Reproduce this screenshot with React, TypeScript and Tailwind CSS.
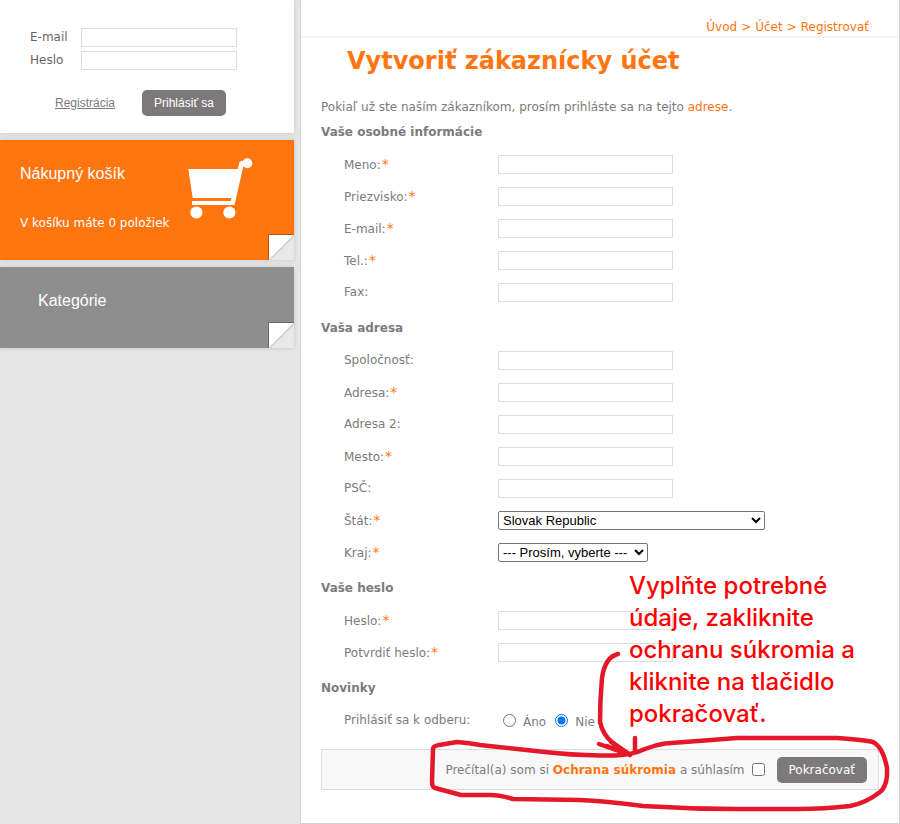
import type { ReactNode } from "react";

type FieldItem = {
	id: string;
	label: string;
	required?: boolean;
	type?: string;
}

const personalFields: FieldItem[] = [
	{ id: 'firstname', label: 'Meno:', required: true },
	{ id: 'lastname', label: 'Priezvisko:', required: true },
	{ id: 'email', label: 'E-mail:', required: true, type: 'email' },
	{ id: 'telephone', label: 'Tel.:', required: true, type: 'tel' },
	{ id: 'fax', label: 'Fax:' },
]

const addressFields: FieldItem[] = [
	{ id: 'company', label: 'Spoločnosť:' },
	{ id: 'address1', label: 'Adresa:', required: true },
	{ id: 'address2', label: 'Adresa 2:' },
	{ id: 'city', label: 'Mesto:', required: true },
	{ id: 'postcode', label: 'PSČ:' },
]

const passwordFields: FieldItem[] = [
	{ id: 'password', label: 'Heslo:', required: true, type: 'password' },
	{ id: 'confirm', label: 'Potvrdiť heslo:', required: true, type: 'password' },
]

function Row({ id, label, required, children }: { id: string; label: string; required?: boolean; children: ReactNode }) {
	return (
		<div className="flex h-8 items-center pl-[23px]">
			<label htmlFor={id} className="w-[154px] shrink-0 leading-4">
				{label}{required && <span className="ml-px text-sm leading-4 text-[#ff750f]">*</span>}
			</label>
			{children}
		</div>
	)
}

function Fields({ items }: { items: FieldItem[] }) {
	return (
		<>
			{items.map((item) => (
				<Row key={item.id} id={item.id} label={item.label} required={item.required}>
					<input id={item.id} type={item.type ?? 'text'} className={`${textInput} w-[175px]`} />
				</Row>
			))}
		</>
	)
}

function Section({ title, children }: { title: string; children: ReactNode }) {
	return (
		<section className="mb-1">
			<h2 className="flex h-8 items-center font-bold">{title}</h2>
			{children}
		</section>
	)
}

// folded paper corner of the sidebar boxes
function Fold() {
	return (
		<svg className="absolute right-0 bottom-0 h-[26px] w-[26px]" viewBox="0 0 26 26" aria-hidden="true">
			<rect width="26" height="26" fill="#000" opacity="0.25" />
			<rect x="1" y="1" width="25" height="25" fill="#fff" />
			<path d="M26 1V26H1Z" fill="#e8e8e8" />
			<path d="M26 1.5L1.5 26" stroke="#cfcfcf" strokeWidth="1.6" />
		</svg>
	)
}

function Cart() {
	return (
		<svg className="absolute top-[18px] left-[188px] h-[62px] w-[66px]" viewBox="0 0 66 62" fill="#fff" aria-hidden="true">
			<path d="M0.300 11H49.800L51.300 4.500Q51.800 3 53.500 3H59V7.500H55.500L46.500 47H4V43H42.800L43.300 40H4.700Z" />
			<circle cx="59.300" cy="5.300" r="5" />
			<circle cx="8.400" cy="54.500" r="6.100" />
			<circle cx="41.400" cy="54.500" r="6.100" />
		</svg>
	)
}

function Sidebar() {
	return (
		<aside className="flex w-[294px] shrink-0 flex-col gap-[7px]">
			<form className={`${box} bg-white pt-7 pb-[17px] pl-[30px]`}>
				<div className="flex flex-col gap-1 text-[#666]">
					<div className="flex items-center">
						<label htmlFor="login-email" className="w-[51px] leading-[19px]">E-mail</label>
						<input id="login-email" type="text" className={`${textInput} w-[156px]`} />
					</div>
					<div className="flex items-center">
						<label htmlFor="login-password" className="w-[51px] leading-[19px]">Heslo</label>
						<input id="login-password" type="password" className={`${textInput} w-[156px]`} />
					</div>
				</div>
				<div className="mt-5 flex items-center gap-[27px] pl-[25px] font-['Liberation_Sans',Arial,sans-serif]">
					<a href="#register" className="underline">Registrácia</a>
					<button type="button" className="h-[26px] rounded-[5px] bg-[#7c797b] px-3 text-white">Prihlásiť sa</button>
				</div>
			</form>
			<section className={`${box} h-[120px] bg-[#ff750f] pt-6 pl-5 text-white`}>
				<h2 className={boxTitle}>Nákupný košík</h2>
				<p className="mt-[30px] leading-[18px]">V košíku máte 0 položiek</p>
				<Cart />
				<Fold />
			</section>
			<section className={`${box} h-[81px] bg-[#8e8e8e] pt-6 pl-[38px] text-white`}>
				<h2 className={boxTitle}>Kategórie</h2>
				<Fold />
			</section>
		</aside>
	)
}

// red hand-drawn hint laid over the form
function Hint() {
	return (
		<>
			<p className="pointer-events-none absolute top-[570px] left-[328px] w-[240px] font-['Inter',sans-serif] text-2xl leading-8 font-medium text-[#ff0000]">
				Vyplňte potrebné<br />údaje, zakliknite<br />ochranu súkromia a<br />kliknite na tlačidlo<br />pokračovať.
			</p>
			<svg className="pointer-events-none absolute top-[640px] left-[119px] h-[180px] w-[480px]" viewBox="420 640 480 180" fill="none" stroke="#e5172b" strokeWidth="4.500" strokeLinecap="round" strokeLinejoin="round" aria-hidden="true">
				<path d="M433 749Q433 746 439 745L457 742Q470 743 480 745L545 752Q570 755 600 755.500H615Q632 755 645 749Q655 745 665 743.500L737 738H837Q865 740 873 742Q883 747 887 768V776Q886 787 880 792Q866 803 850 806Q825 809 797 809H737Q690 809 643 806Q605 801 580 800L513 799Q500 795 490 795H461L435 788Q432 787 432 782Z" />
				<path d="M618 654Q605 657 602 678Q600 700 600 722Q603 735 612 742L630 755" />
				<path d="M599 744Q615 750 629 754M611 742L629 754M607 746L622 752M614 747L627 753M635 738V752" />
			</svg>
		</>
	)
}

export default function App() {
	return (
		<div className="flex min-h-screen items-start gap-[6px] bg-[#e6e6e6] font-['DejaVu_Sans',Verdana,sans-serif] text-xs text-[#7b7b7b]">
			<Sidebar />
			<main className="relative min-w-0 flex-1 border border-t-0 border-[#d4d4d4] bg-white pb-[33px]">
				<nav className="flex h-[38px] justify-end gap-1 border-b-2 border-[#f6f6f6] pt-[18px] pr-[30px] leading-[18px] text-[#ff750f]">
					<a href="#home">Úvod</a>
					<span>&gt;</span>
					<a href="#account">Účet</a>
					<span>&gt;</span>
					<a href="#register">Registrovať</a>
				</nav>
				<form className="px-5">
					<h1 className="pl-[26px] text-2xl leading-[46px] font-bold text-[#ff750f]">Vytvoriť zákaznícky účet</h1>
					<p className="mt-[14px] leading-[18px]">
						Pokiaľ už ste naším zákazníkom, prosím prihláste sa na tejto <a href="#login" className="text-[#ff750f]">adrese</a>.
					</p>
					<Section title="Vaše osobné informácie">
						<Fields items={personalFields} />
					</Section>
					<Section title="Vaša adresa">
						<Fields items={addressFields} />
						<Row id="country" label="Štát:" required>
							<select id="country" className={`${selectInput} w-[267px]`}>
								<option>Slovak Republic</option>
							</select>
						</Row>
						<Row id="zone" label="Kraj:" required>
							<select id="zone" className={`${selectInput} w-[150px]`}>
								<option>--- Prosím, vyberte ---</option>
							</select>
						</Row>
					</Section>
					<Section title="Vaše heslo">
						<Fields items={passwordFields} />
					</Section>
					<Section title="Novinky">
						<fieldset className="flex h-8 items-center pl-[23px]">
							<legend className="float-left w-[154px]">Prihlásiť sa k odberu:</legend>
							<input id="news-yes" type="radio" name="newsletter" className="ml-[5px] h-[13px] w-[13px]" />
							<label htmlFor="news-yes" className="ml-[7px] pt-[3px]">Áno</label>
							<input id="news-no" type="radio" name="newsletter" defaultChecked className="ml-[9px] h-[13px] w-[13px]" />
							<label htmlFor="news-no" className="ml-[7px] pt-[3px]">Nie</label>
						</fieldset>
					</Section>
					<div className="mt-[13px] flex h-[41px] items-center justify-end border border-[#ddd] bg-[#f8f8f8] pr-[11px]">
						<label htmlFor="agree">
							Prečítal(a) som si <a href="#privacy" className="font-bold text-[#ff750f]">Ochrana súkromia</a> a súhlasím
						</label>
						<input id="agree" type="checkbox" className="ml-[7px] h-[13px] w-[13px]" />
						<button type="button" className="ml-3 h-[26px] rounded-[5px] bg-[#7c797b] px-3 text-white">Pokračovať</button>
					</div>
				</form>
				<Hint />
			</main>
		</div>
	)
}


const box = "relative shadow-[0_0_5px_rgba(0,0,0,0.15)]";
const boxTitle = "font-['Liberation_Sans',Arial,sans-serif] text-base leading-[20px]";
const textInput = "h-[19px] border border-[#ddd] bg-white px-1 text-xs text-black";
const selectInput = "h-[19px] rounded-[2px] border border-[#767676] bg-white font-['Liberation_Sans',Arial,sans-serif] text-[13px] leading-[17px] text-black";
